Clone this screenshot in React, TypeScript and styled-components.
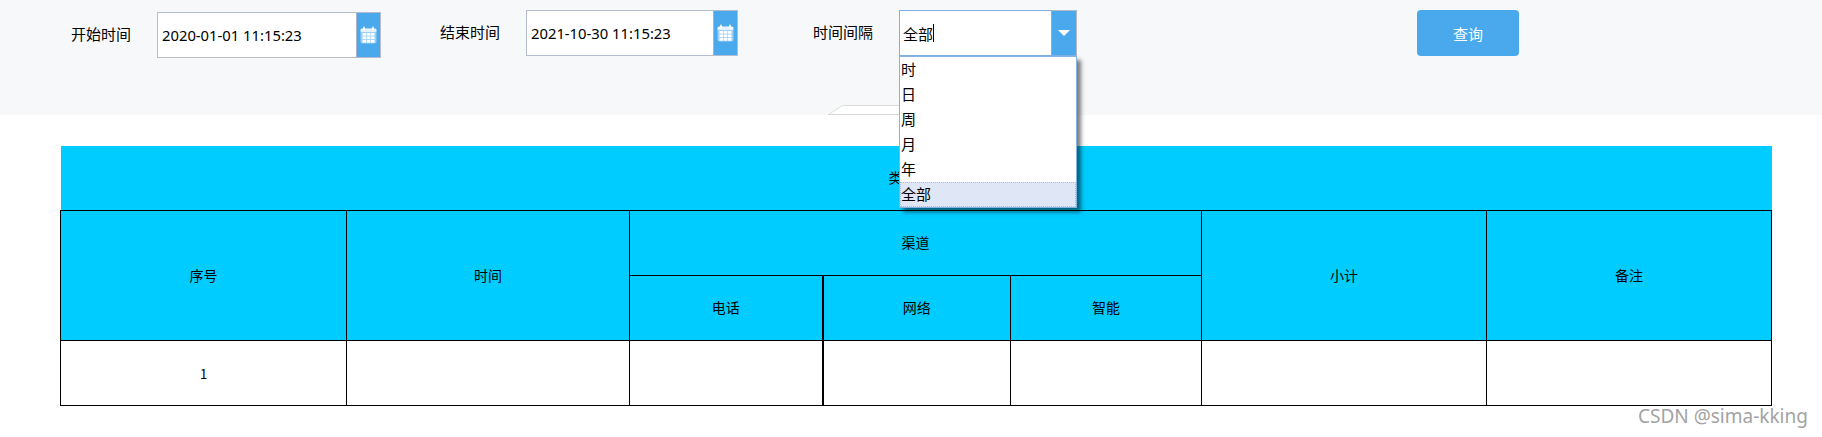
import styled, { createGlobalStyle } from "styled-components";

const intervals = ["时", "日", "周", "月", "年", "全部"];
const channels = ["电话", "网络", "智能"];
const columnWidths = [286, 283, 193, 188, 191, 285, 285];

const GlobalStyle = createGlobalStyle`
  html, body {
    margin: 0;
    padding: 0;
    background: #fff;
    overflow: hidden;
  }
  body {
    font-family: "Noto Sans CJK SC", "Liberation Sans", sans-serif;
    color: #000;
  }
`;

function CalendarIcon() {
  return (
    <svg width="17" height="18" viewBox="0 0 17 18">
      <rect x="0.5" y="2.5" width="16" height="15" rx="2" fill="#fff" fillOpacity="0.45" />
      <rect x="0.5" y="2.5" width="16" height="3.5" rx="1.5" fill="#fff" fillOpacity="0.75" />
      <rect x="3" y="0.5" width="2" height="4" rx="1" fill="#fff" fillOpacity="0.85" />
      <rect x="12" y="0.5" width="2" height="4" rx="1" fill="#fff" fillOpacity="0.85" />
      {[7, 10.5, 14].map((y) =>
        [2.5, 6.7, 10.9].map((x) => (
          <rect key={`${x}-${y}`} x={x} y={y} width="3.6" height="2.7" fill="#fff" />
        ))
      )}
    </svg>
  );
}

export default function App() {
  return (
    <Page>
      <GlobalStyle />
      <Toolbar>
        <Field $width={369} $offset={2}>
          <FieldLabel>开始时间</FieldLabel>
          <DateInput $width={224}>
            <DateValue>2020-01-01 11:15:23</DateValue>
            <CalendarButton>
              <CalendarIcon />
            </CalendarButton>
          </DateInput>
        </Field>
        <Field $width={373}>
          <FieldLabel>结束时间</FieldLabel>
          <DateInput $width={212}>
            <DateValue>2021-10-30 11:15:23</DateValue>
            <CalendarButton>
              <CalendarIcon />
            </CalendarButton>
          </DateInput>
        </Field>
        <Field $width={604}>
          <FieldLabel>时间间隔</FieldLabel>
          <SelectBox>
            <SelectValue>
              全部
              <Caret />
            </SelectValue>
            <SelectArrow>
              <svg width="12" height="6" viewBox="0 0 12 6">
                <path d="M0 0h12L6 6z" fill="#fff" />
              </svg>
            </SelectArrow>
            <OptionList>
              {intervals.map((item) => (
                <OptionItem key={item} $selected={item === "全部"}>
                  {item}
                </OptionItem>
              ))}
            </OptionList>
          </SelectBox>
        </Field>
        <QueryButton>查询</QueryButton>
        <CollapseTab width="75" height="10" viewBox="0 0 75 10">
          <path d="M0.5 9.5 L14.5 0.5 H75 V9.5 Z" fill="#fff" stroke="#dcdcdc" />
          <path d="M0 9.5 H75" stroke="#d8d8d8" strokeWidth="1" />
        </CollapseTab>
      </Toolbar>

      <TableSection>
        <Banner>类型统计</Banner>
        <StatsTable>
          <colgroup>
            {columnWidths.map((width, i) => (
              <col key={i} width={width} />
            ))}
          </colgroup>
          <thead>
            <tr>
              <HeadCell rowSpan={2}>序号</HeadCell>
              <HeadCell rowSpan={2}>时间</HeadCell>
              <HeadCell colSpan={3}>渠道</HeadCell>
              <HeadCell rowSpan={2}>小计</HeadCell>
              <HeadCell rowSpan={2}>备注</HeadCell>
            </tr>
            <tr>
              {channels.map((name, i) => (
                <HeadCell key={name} $thickRight={i === 0}>
                  {name}
                </HeadCell>
              ))}
            </tr>
          </thead>
          <tbody>
            <tr>
              <BodyCell>1</BodyCell>
              <BodyCell />
              <BodyCell $thickRight />
              <BodyCell />
              <BodyCell />
              <BodyCell />
              <BodyCell />
            </tr>
          </tbody>
        </StatsTable>
      </TableSection>

      <Watermark>CSDN @sima-kking</Watermark>
    </Page>
  );
}

const Page = styled.div`
  position: relative;
  width: 1822px;
  height: 437px;
  overflow: hidden;
`;

const Toolbar = styled.div`
  position: relative;
  display: flex;
  align-items: flex-start;
  box-sizing: border-box;
  height: 115px;
  padding: 10px 0 0 71px;
  background-color: #f6f8fa;
`;

const Field = styled.div<{ $width: number; $offset?: number }>`
  display: flex;
  align-items: center;
  flex: none;
  width: ${(p) => p.$width}px;
  margin-top: ${(p) => p.$offset ?? 0}px;
`;

const FieldLabel = styled.span`
  flex: none;
  width: 86px;
  padding-bottom: 2px;
  font-size: 15px;
  line-height: 20px;
`;

const DateInput = styled.div<{ $width: number }>`
  display: flex;
  box-sizing: border-box;
  width: ${(p) => p.$width}px;
  height: 46px;
  border: 1px solid #b6bbcd;
  background-color: #fff;
`;

const DateValue = styled.div`
  flex: 1;
  padding-left: 4px;
  font-family: "Noto Sans", "Liberation Sans", sans-serif;
  font-size: 14.8px;
  line-height: 44px;
`;

const CalendarButton = styled.div`
  display: flex;
  align-items: center;
  justify-content: center;
  flex: none;
  width: 23px;
  border-left: 1px solid #a9b4c6;
  background-color: #4aa9ed;
`;

const SelectBox = styled.div`
  position: relative;
  display: flex;
  flex: none;
  width: 178px;
  height: 46px;
`;

const SelectValue = styled.div`
  display: flex;
  align-items: center;
  flex: 1;
  box-sizing: border-box;
  padding-left: 3px;
  border: 1px solid #7fb1e3;
  background-color: #fff;
  font-size: 15px;
`;

const Caret = styled.span`
  width: 1px;
  height: 18px;
  background-color: #000;
`;

const SelectArrow = styled.div`
  display: flex;
  align-items: center;
  justify-content: center;
  flex: none;
  box-sizing: border-box;
  width: 25px;
  border-top: 1px solid #b3b8c2;
  border-right: 1px solid #b3b8c2;
  border-bottom: 1px solid #7fb1e3;
  background-color: #4aa9ed;
`;

const OptionList = styled.div`
  position: absolute;
  top: 100%;
  left: 0;
  z-index: 2;
  box-sizing: border-box;
  width: 178px;
  height: 152px;
  border: 1px solid #86b3e3;
  background-color: #fff;
  box-shadow: 4px 4px 4px rgba(0, 0, 0, 0.5);
`;

const OptionItem = styled.div<{ $selected?: boolean }>`
  box-sizing: border-box;
  height: 25px;
  border: 1px dotted ${(p) => (p.$selected ? "#a9b8dc" : "transparent")};
  background-color: ${(p) => (p.$selected ? "#dfe7f6" : "transparent")};
  font-size: 15px;
  line-height: 22px;
`;

const QueryButton = styled.button`
  flex: none;
  width: 102px;
  height: 46px;
  padding: 0;
  border: none;
  border-radius: 4px;
  background-color: #4aa9ed;
  color: #fff;
  font-family: inherit;
  font-size: 15px;
`;

const CollapseTab = styled.svg`
  position: absolute;
  top: 105px;
  left: 828px;
`;

const TableSection = styled.div`
  padding: 31px 0 0 60px;
`;

const Banner = styled.div`
  width: 1711px;
  height: 64px;
  margin-left: 1px;
  background-color: #00ccff;
  font-size: 14px;
  line-height: 62px;
  text-align: center;
`;

const StatsTable = styled.table`
  width: 1712px;
  table-layout: fixed;
  border-collapse: collapse;
  font-size: 14px;
`;

const HeadCell = styled.th<{ $thickRight?: boolean }>`
  box-sizing: border-box;
  height: 65px;
  padding: 0 0 2px;
  border: 1px solid #000;
  border-right-width: ${(p) => (p.$thickRight ? 2 : 1)}px;
  background-color: #00ccff;
  font-weight: normal;
  text-align: center;
`;

const BodyCell = styled.td<{ $thickRight?: boolean }>`
  box-sizing: border-box;
  height: 65px;
  padding: 0;
  border: 1px solid #000;
  border-right-width: ${(p) => (p.$thickRight ? 2 : 1)}px;
  font-size: 13px;
  text-align: center;
`;

const Watermark = styled.div`
  position: absolute;
  top: 403px;
  left: 1638px;
  color: #a3a3a3;
  font-family: "Noto Sans", "Liberation Sans", sans-serif;
  font-size: 19px;
  line-height: 26px;
  white-space: nowrap;
`;
